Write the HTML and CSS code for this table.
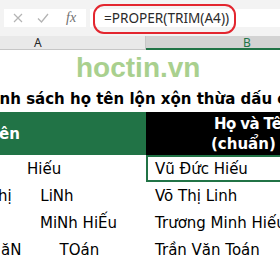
FILE: index.html
```html
<!DOCTYPE html>
<html>
<head>
<meta charset="utf-8">
<link rel="stylesheet" href="styles.css">
</head>
<body>
<div class="app">
  <div class="fbar">
    <div class="fbtns">
      <span class="btn x">
        <svg width="10" height="10" viewBox="0 0 10 10"><path d="M1 1 L9 9 M9 1 L1 9" stroke="#b4b4b4" stroke-width="1.2" fill="none"/></svg>
      </span>
      <span class="btn ok">
        <svg width="12" height="10" viewBox="0 0 12 10"><path d="M1 5.5 L4.5 9 L11 1" stroke="#b4b4b4" stroke-width="1.3" fill="none"/></svg>
      </span>
      <span class="btn fx">fx</span>
    </div>
    <div class="finput">
      <span class="ftext">=PROPER(TRIM(A4))</span>
      <span class="ring"></span>
    </div>
  </div>
  <div class="colhdr">
    <div class="ch cha">A</div>
    <div class="ch chb">B</div>
  </div>
  <div class="sheet">
    <div class="row r-logo"><div class="logo">hoctin.vn</div></div>
    <div class="row r-title"><div class="title">Danh sách họ tên lộn xộn thừa dấu cách</div></div>
    <div class="row r-head">
      <div class="cell ca hg"><span class="hl">ên</span></div>
      <div class="cell cb hb"><span class="hl1">Họ và Tên</span><span class="hl2">(chuẩn)</span></div>
    </div>
    <div class="row r-data">
      <div class="cell ca"><span class="t i1">Hiếu</span></div>
      <div class="cell cb sel"><span class="t">Vũ Đức Hiếu</span></div>
    </div>
    <div class="row r-data">
      <div class="cell ca"><span class="t i2">hị      LiNh</span></div>
      <div class="cell cb"><span class="t">Võ Thị Linh</span></div>
    </div>
    <div class="row r-data">
      <div class="cell ca"><span class="t i3">MiNh HiẾu</span></div>
      <div class="cell cb"><span class="t">Trương Minh Hiếu</span></div>
    </div>
    <div class="row r-data">
      <div class="cell ca"><span class="t i4">ăN        TOán</span></div>
      <div class="cell cb"><span class="t">Trần Văn Toán</span></div>
    </div>
  </div>
</div>
</body>
</html>
```
FILE: styles.css
```css
html, body {
  margin: 0;
  padding: 0;
  background: #ffffff;
}
.app {
  width: 280px;
  height: 280px;
  overflow: hidden;
  position: relative;
  background: #ffffff;
}
.fbar {
  height: 36px;
  box-sizing: border-box;
  background: #f3f3f3;
  display: flex;
  gap: 4px;
  padding: 9px 0 9px 4px;
}
.fbtns {
  width: 82px;
  height: 18px;
  background: #ffffff;
  display: flex;
  align-items: center;
}
.btn {
  display: flex;
  align-items: center;
  justify-content: center;
}
.x { width: 10px; margin-left: 9px; }
.ok { width: 12px; margin-left: 14px; }
.fx {
  margin-left: 17px;
  font-family: "Liberation Serif", serif;
  font-style: italic;
  font-size: 14px;
  color: #707070;
  line-height: 18px;
}
.finput {
  flex: 1;
  height: 18px;
  background: #ffffff;
  position: relative;
}
.ftext {
  display: block;
  padding-left: 14px;
  font-family: "Noto Sans", sans-serif;
  font-size: 13.6px;
  line-height: 18px;
  color: #2b2b2b;
  white-space: nowrap;
}
.ring {
  position: absolute;
  left: 3px;
  top: -5px;
  width: 143px;
  height: 30px;
  box-sizing: border-box;
  border: 2px solid #e3262f;
  border-radius: 11px;
}
.colhdr {
  height: 14px;
  display: flex;
  font-family: "Noto Sans", sans-serif;
  font-size: 12px;
  line-height: 13px;
}
.ch {
  box-sizing: border-box;
  height: 14px;
}
.cha {
  width: 146px;
  background: #e9e9e9;
  border-right: 1px solid #c6c6c6;
  border-bottom: 1px solid #c6c6c6;
  padding-left: 34px;
  color: #262626;
}
.chb {
  flex: 1;
  background: #d3d3d3;
  border-bottom: 2px solid #217346;
  padding-left: 97px;
  color: #217346;
}
.sheet {
  font-family: "DejaVu Sans", sans-serif;
  color: #000000;
}
.row {
  display: flex;
  white-space: pre;
  overflow: hidden;
}
.r-logo {
  height: 36px;
}
.logo {
  padding-left: 76px;
  font-family: "Liberation Sans", sans-serif;
  font-weight: bold;
  font-size: 28px;
  line-height: 36px;
  color: #a9d08e;
}
.r-title {
  height: 26px;
}
.title {
  margin-left: -23px;
  font-weight: bold;
  font-size: 15px;
  line-height: 26px;
}
.r-head {
  height: 43px;
}
.cell {
  box-sizing: border-box;
  overflow: hidden;
}
.ca {
  width: 146px;
  flex: none;
}
.cb {
  width: 200px;
  flex: none;
}
.hg {
  background: #217346;
  color: #ffffff;
  font-weight: bold;
  font-size: 15px;
  display: flex;
  align-items: center;
}
.hl {
  margin-left: -1px;
}
.hb {
  background: #000000;
  color: #ffffff;
  font-weight: bold;
  font-size: 15px;
  display: flex;
  flex-direction: column;
  justify-content: center;
  line-height: 20px;
}
.hl1 { padding-left: 68px; letter-spacing: -0.6px; }
.hl2 { padding-left: 65px; }
.r-data {
  height: 27px;
}
.r-data .cell {
  display: flex;
  align-items: center;
  font-size: 15px;
}
.t {
  padding-left: 9px;
}
.ca .t { padding-left: 0; }
.i1 { margin-left: 27px; }
.i2 { margin-left: -2px; }
.i3 { margin-left: 40px; }
.i4 { margin-left: 1px; }
.sel {
  box-shadow: inset 0 0 0 2px #217346;
}
```
